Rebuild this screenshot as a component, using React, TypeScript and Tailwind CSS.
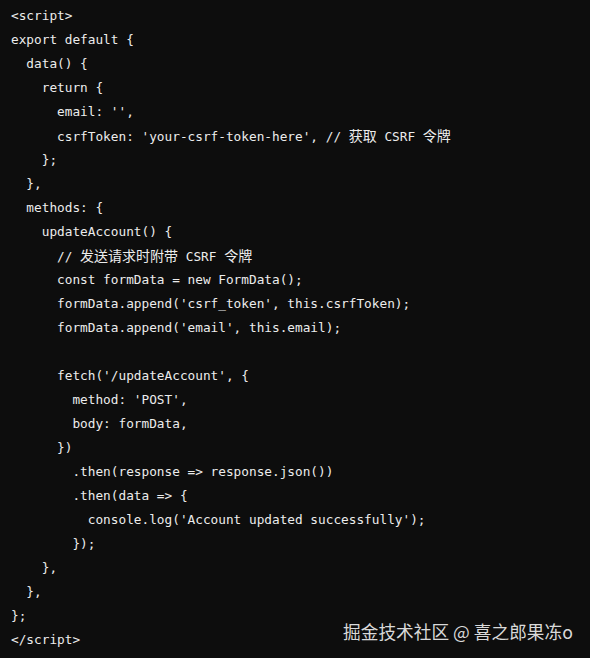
const lines = [
  '<script>',
  'export default {',
  '  data() {',
  '    return {',
  "      email: '',",
  "      csrfToken: 'your-csrf-token-here', // 获取 CSRF 令牌",
  '    };',
  '  },',
  '  methods: {',
  '    updateAccount() {',
  '      // 发送请求时附带 CSRF 令牌',
  '      const formData = new FormData();',
  "      formData.append('csrf_token', this.csrfToken);",
  "      formData.append('email', this.email);",
  '',
  "      fetch('/updateAccount', {",
  "        method: 'POST',",
  '        body: formData,',
  '      })',
  '        .then(response => response.json())',
  '        .then(data => {',
  "          console.log('Account updated successfully');",
  '        });',
  '    },',
  '  },',
  '};',
  '</script>',
];

// split a line into latin / CJK runs so the CJK glyphs get their own size
function CodeLine({ text }: { text: string }) {
  const parts = text.split(/([\u4e00-\u9fff]+)/);
  return (
    <div className="h-[24px]">
      {parts.map((p, i) =>
        /[\u4e00-\u9fff]/.test(p) ? (
          <span key={i} className="text-[14px]">
            {p}
          </span>
        ) : (
          <span key={i}>{p}</span>
        )
      )}
    </div>
  );
}

export default function App() {
  return (
    <div className="relative w-[590px] h-[658px] overflow-hidden bg-[#0d0d0d]">
      <pre className="pt-[4px] pl-[11px] m-0 text-[12.75px] leading-[24px] text-[#ececec] font-['DejaVu_Sans_Mono','Noto_Sans_CJK_SC',monospace] whitespace-pre">
        {lines.map((line, i) => (
          <CodeLine key={i} text={line} />
        ))}
      </pre>
      <div className="absolute left-[343px] top-[619px] text-[17.7px] leading-[24px] text-[#d9d9d9] font-['Noto_Sans_CJK_SC',sans-serif]">
        掘金技术社区 @ 喜之郎果冻o
      </div>
    </div>
  );
}
